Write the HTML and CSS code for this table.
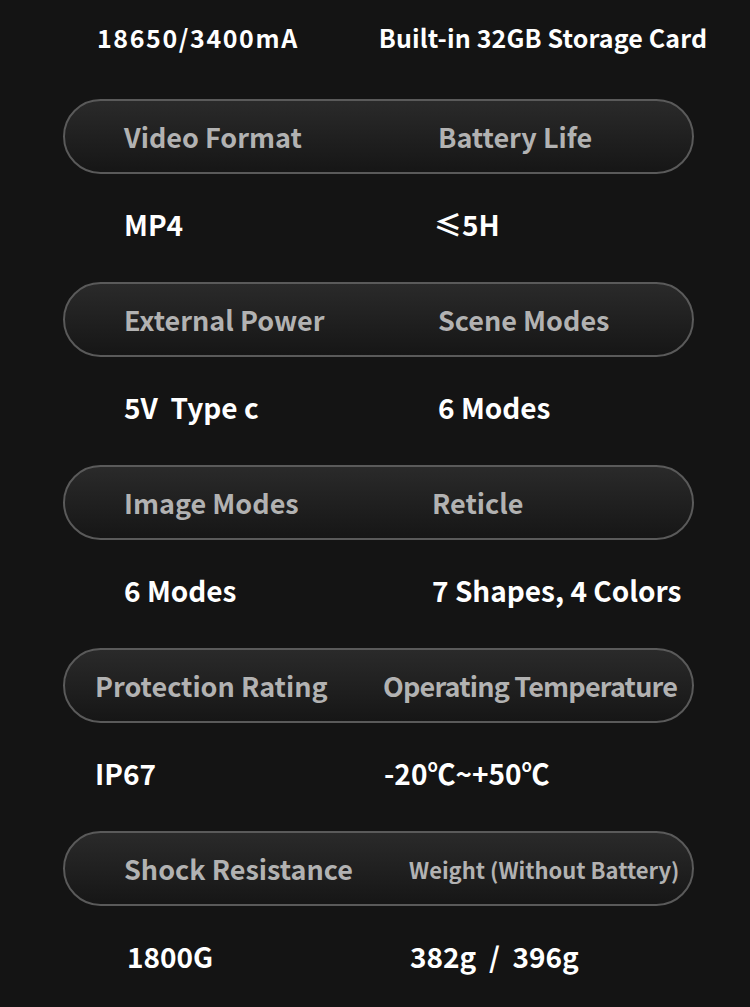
FILE: index.html
```html
<!DOCTYPE html>
<html>
<head>
<meta charset="utf-8">
<link rel="stylesheet" href="styles.css">
</head>
<body>
<div class="page">
  <div class="top">
    <span class="top-a">18650/3400mA</span>
    <span class="top-b">Built-in 32GB Storage Card</span>
  </div>

  <div class="pill r1"><span class="l">Video Format</span><span class="r">Battery Life</span></div>
  <div class="vals r1"><span class="l">MP4</span><span class="r">≤5H</span></div>

  <div class="pill r2"><span class="l">External Power</span><span class="r">Scene Modes</span></div>
  <div class="vals r2"><span class="l">5V&nbsp; Type c</span><span class="r">6 Modes</span></div>

  <div class="pill r3"><span class="l">Image Modes</span><span class="r">Reticle</span></div>
  <div class="vals r3"><span class="l">6 Modes</span><span class="r">7 Shapes, 4 Colors</span></div>

  <div class="pill r4"><span class="l">Protection Rating</span><span class="r tight">Operating Temperature</span></div>
  <div class="vals r4"><span class="l">IP67</span><span class="r">-20℃~+50℃</span></div>

  <div class="pill r5"><span class="l">Shock Resistance</span><span class="r small">Weight (Without Battery)</span></div>
  <div class="vals r5"><span class="l">1800G</span><span class="r">382g&nbsp; /&nbsp; 396g</span></div>
</div>
</body>
</html>
```
FILE: styles.css
```css
html, body {
  margin: 0;
  padding: 0;
  background: #141414;
}
.page {
  width: 750px;
  height: 1007px;
  background: #141414;
  font-family: "Noto Sans CJK SC", "Noto Sans", sans-serif;
  font-weight: 700;
  overflow: hidden;
  white-space: nowrap;
}
.top {
  display: flex;
  box-sizing: border-box;
  height: 99px;
  padding-bottom: 25px;
  align-items: center;
  color: #fff;
  font-size: 25px;
}
.top-a { margin-left: 97px; letter-spacing: 1.6px; }
.top-b { margin-left: 80px; letter-spacing: 0.15px; }

.pill {
  display: flex;
  align-items: center;
  box-sizing: border-box;
  margin-left: 63px;
  width: 631px;
  height: 75px;
  border: 2px solid #5a5a5a;
  border-radius: 38px;
  background: linear-gradient(#2a2a2a, #161616);
  color: #b2b2b2;
  font-size: 27px;
  position: relative;
}
.pill .l, .pill .r, .vals .l, .vals .r { position: absolute; }
.pill .l { left: 59px; }
.pill .r { left: 373px; }
.pill .small { font-size: 22px; }
.pill .tight { letter-spacing: -0.8px; }

.vals {
  position: relative;
  display: flex;
  align-items: center;
  box-sizing: border-box;
  height: 108px;
  padding-bottom: 8px;
  color: #fff;
  font-size: 28px;
}
.vals .l { left: 124px; }
.vals .r { left: 438px; }

.vals.r1 .r { left: 434px; }
.pill.r3 .r { left: 367px; }
.vals.r3 .r { left: 432px; }
.pill.r4 .l { left: 30px; }
.pill.r4 .r { left: 318px; }
.vals.r4 .l { left: 95px; }
.vals.r4 .r { left: 384px; }
.pill.r5 .r { left: 344px; }
.vals.r5 .l { left: 127px; }
.vals.r5 .r { left: 410px; }
```
